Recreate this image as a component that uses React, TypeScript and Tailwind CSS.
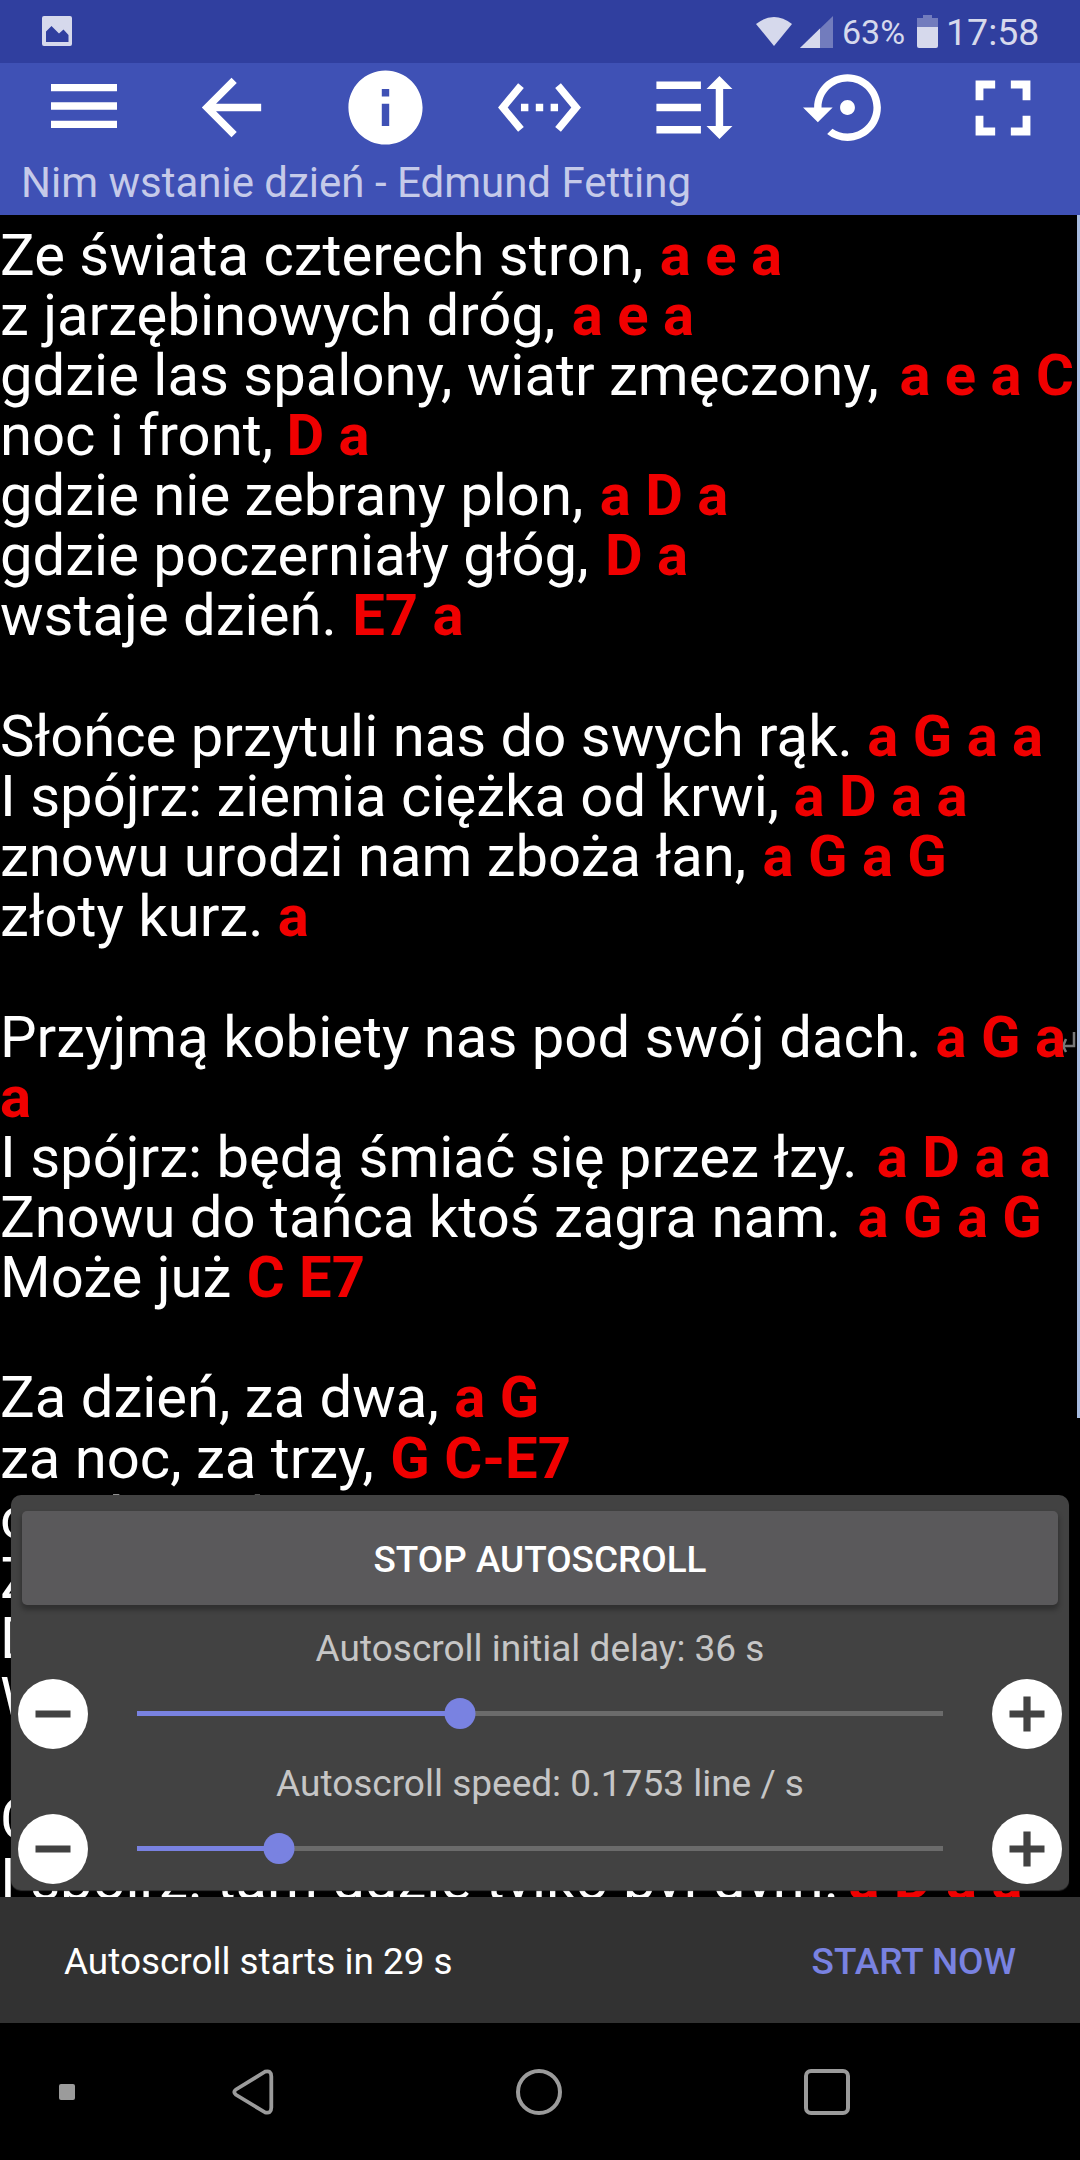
import type { ReactNode } from "react";

type Line = { text: string; chords?: string; wrapped?: boolean; shift?: number };

// `shift` nudges the chord run (px) relative to the end of the lyric text.
const LINES: Line[] = [
  { text: "Ze świata czterech stron, ", chords: "a e a", shift: 2 },
  { text: "z jarzębinowych dróg, ", chords: "a e a", shift: 2 },
  { text: "gdzie las spalony, wiatr zmęczony, ", chords: "a e a C", shift: 6 },
  { text: "noc i front, ", chords: "D a", shift: -1 },
  { text: "gdzie nie zebrany plon, ", chords: "a D a", shift: 2 },
  { text: "gdzie poczerniały głóg, ", chords: "D a", shift: 2 },
  { text: "wstaje dzień. ", chords: "E7 a", shift: 1 },
  { text: "" },
  { text: "Słońce przytuli nas do swych rąk. ", chords: "a G a a" },
  { text: "I spójrz: ziemia ciężka od krwi, ", chords: "a D a a" },
  { text: "znowu urodzi nam zboża łan, ", chords: "a G a G", shift: 2 },
  { text: "złoty kurz. ", chords: "a" },
  { text: "" },
  { text: "Przyjmą kobiety nas pod swój dach. ", chords: "a G a", wrapped: true },
  { text: "", chords: "a" },
  { text: "I spójrz: będą śmiać się przez łzy. ", chords: "a D a a", shift: 5 },
  { text: "Znowu do tańca ktoś zagra nam. ", chords: "a G a G", shift: 2 },
  { text: "Może już ", chords: "C E7", shift: 1 },
  { text: "" },
  { text: "Za dzień, za dwa, ", chords: "a G", shift: 1 },
  { text: "za noc, za trzy, ", chords: "G C-E7", shift: 2 },
  { text: "choć nie dziś. " },
  { text: "Za noc, za dzień" },
  { text: "Doczekasz się," },
  { text: "Wstanie świt." },
  { text: "" },
  { text: "Chleby upieką się w piecach nam." },
  { text: "I spójrz: tam gdzie tylko był dym. ", chords: "a D a a", shift: -5 },
];

function Icon({ size, children }: { size: number; children: ReactNode }) {
  return (
    <svg width={size} height={size} viewBox="0 0 24 24" fill="currentColor" className="block shrink-0">
      {children}
    </svg>
  );
}

function StatusBar() {
  return (
    <div className="flex h-[63px] shrink-0 items-start bg-[#303f9f] pl-[42px] text-[#d6d9ec]">
      <svg width="30" height="30" viewBox="0 0 30 30" className="mt-4 block" fill="currentColor">
        <path fillRule="evenodd" d="M2 0H28Q30 0 30 2V28Q30 30 28 30H2Q0 30 0 28V2Q0 0 2 0ZM4 26H26.500V19L21.500 13.500L17 17.500L9.500 10L4 15.500Z" />
      </svg>
      <svg width="36" height="29" viewBox="0 0 36 29" className="mt-[17px] ml-[684px] block" fill="currentColor">
        <path d="M0 7Q18 -7 36 7L18 29Z" />
      </svg>
      <svg width="33" height="32" viewBox="0 0 33 32" className="mt-4 ml-[8px] block" fill="currentColor">
        <path d="M0 32L33 0V32Z" opacity="0.4" />
        <path d="M0 32L20 12.600V32Z" />
      </svg>
      <span className="mt-[12px] ml-[9px] w-[62px] text-[34px] leading-[41px] whitespace-nowrap">63%</span>
      <svg width="21" height="33" viewBox="0 0 21 33" className="mt-[15px] ml-[13px] block" fill="currentColor">
        <path d="M6 0H15V3H21V12H0V3H6Z" opacity="0.4" />
        <path d="M0 12H21V31Q21 33 19 33H2Q0 33 0 31Z" />
      </svg>
      <span className="mt-[10px] ml-[8px] text-[37.500px] leading-[45px] whitespace-nowrap">17:58</span>
    </div>
  );
}

function Toolbar() {
  return (
    <div className="flex h-[152px] shrink-0 flex-col bg-[#3f51b5] text-white">
      <div className="flex h-[89px] items-center pl-10">
        <div className="-mt-[3px]">
          <Icon size={88}>
            <path d="M3 18h18v-2H3v2zm0-5h18v-2H3v2zm0-7v2h18V6H3z" />
          </Icon>
        </div>
        <div className="ml-[59px] flex gap-[65px]">
          <Icon size={89}>
            <path d="M20 11H7.830l5.590-5.590L12 4l-8 8 8 8 1.410-1.410L7.830 13H20v-2z" />
          </Icon>
          <Icon size={89}>
            <path d="M12 2C6.480 2 2 6.480 2 12s4.480 10 10 10 10-4.480 10-10S17.520 2 12 2zm1 15h-2v-6h2v6zm0-8h-2V7h2v2z" />
          </Icon>
          <Icon size={89}>
            <path d="M7.770 6.760L6.230 5.480.82 12l5.410 6.520 1.540-1.280L3.420 12l4.350-5.240zM7 13h2v-2H7v2zm10-2h-2v2h2v-2zm-6 2h2v-2h-2v2zm6.770-7.520l-1.540 1.280L20.580 12l-4.350 5.240 1.540 1.280L23.180 12l-5.410-6.520z" />
          </Icon>
          <Icon size={89}>
            <path d="M18 7h-2.500L19 3.500 22.500 7H20v10h2.500L19 20.500 15.500 17H18V7zM2 5h12v2H2zM2 17h12v2H2zM2 11h12v2H2z" />
          </Icon>
          <Icon size={89}>
            <path d="M14 12c0-1.100-.9-2-2-2s-2 .9-2 2 .9 2 2 2 2-.9 2-2zm-2-9c-4.970 0-9 4.030-9 9H0l4 4 4-4H5c0-3.870 3.130-7 7-7s7 3.130 7 7-3.130 7-7 7c-1.510 0-2.910-.49-4.060-1.300l-1.420 1.440C8.040 20.300 9.940 21 12 21c4.970 0 9-4.030 9-9s-4.030-9-9-9z" />
          </Icon>
        </div>
        <div className="ml-[64px]">
          <Icon size={94}>
            <path d="M7 14H5v5h5v-2H7v-3zm-2-4h2V7h3V5H5v5zm12 7h-3v2h5v-5h-2v3zM14 5v2h3v3h2V5h-5z" />
          </Icon>
        </div>
      </div>
      <div className="pl-[21px] text-[42px] leading-[62px] whitespace-nowrap text-[#c5cae9]">
        Nim wstanie dzień - Edmund Fetting
      </div>
    </div>
  );
}

function Lyrics() {
  return (
    <div className="relative h-[1682px] shrink-0 overflow-hidden pt-[9.500px]">
      {LINES.map((l, i) => (
        <div key={i} className="relative h-[60.160px] text-[58px] leading-[60.160px] whitespace-pre text-white">
          {l.wrapped && (
            <svg width="14" height="21" viewBox="0 0 14 21" className="absolute top-[25px] left-[1062px]" fill="none" stroke="#777" strokeWidth="2.500">
              <path d="M12 0V14H1M4 7L1 14L4 20" />
            </svg>
          )}
          {l.text}
          {l.chords && (
            <span className="relative font-bold text-[#f00000]" style={{ marginLeft: `${l.shift ?? 0}px` }}>
              {l.chords}
            </span>
          )}
        </div>
      ))}
      <div className="absolute top-0 right-0 h-[1203px] w-[3px] bg-[#a9bde1]" />
    </div>
  );
}

function RoundButton({ plus }: { plus?: boolean }) {
  return (
    <svg width="70" height="70" viewBox="0 0 70 70" className="block shrink-0">
      <circle cx="35" cy="35" r="35" fill="#fff" />
      <path d={plus ? "M17.500 35H52.500M35 17.500V52.500" : "M17.500 35H52.500"} stroke="#424242" strokeWidth="7.200" />
    </svg>
  );
}

function SliderRow({ value }: { value: number }) {
  return (
    <div className="flex h-[70px] items-center justify-between px-[7px]">
      <RoundButton />
      <div className="relative -mt-px h-[5px] w-[806px] bg-[#6b6b6b]">
        <div className="h-full bg-[#7982e1]" style={{ width: `${value}px` }} />
        <div className="absolute -top-[13px] size-[31px] -translate-x-1/2 rounded-full bg-[#7982e1]" style={{ left: `${value}px` }} />
      </div>
      <RoundButton plus />
    </div>
  );
}

function AutoscrollPanel() {
  return (
    <div className="absolute top-[1495px] left-[11px] h-[395px] w-[1058px] rounded-[10px] bg-[#424242] pt-4 text-[37px] text-[#c6c6c6] shadow-[0_1px_1px_#303030]">
      <button className="mx-[11px] flex h-[94px] w-[1036px] items-center justify-center rounded-[5px] bg-[#5a595b] pt-[3px] text-[36.900px] font-medium text-white shadow-[0_4px_5px_1px_rgba(0,0,0,0.28)]">
        STOP AUTOSCROLL
      </button>
      <div className="mt-[19px] h-[55px] text-center leading-[50px]">Autoscroll initial delay: 36 s</div>
      <SliderRow value={322.5} />
      <div className="mt-[10px] h-[55px] text-center leading-[50px]">Autoscroll speed: 0.1753 line / s</div>
      <SliderRow value={141.5} />
    </div>
  );
}

function Snackbar() {
  return (
    <div className="flex h-[126px] shrink-0 items-center justify-between bg-[#323232] pt-[3px] pr-[64px] pl-[64px] text-[36.900px] text-white">
      <span>Autoscroll starts in 29 s</span>
      <button className="font-medium text-[#7982e1]">START NOW</button>
    </div>
  );
}

function NavBar() {
  return (
    <div className="flex h-[137px] shrink-0 items-center bg-black pl-[59px] text-[#9b9b9b]">
      <div className="size-4 rounded-xs bg-[#9b9b9b]" />
      <svg width="42" height="46" viewBox="0 0 42 46" className="ml-[157px] block" fill="none" stroke="currentColor" strokeWidth="3.800">
        <path d="M4 20.500Q0.500 23 4 25.800L33 43.300Q39.300 45 39.300 38.500V7.500Q39.300 1 33 2.700Z" />
      </svg>
      <div className="ml-[242px] size-[46px] rounded-full border-4 border-current" />
      <div className="ml-[242px] size-[46px] rounded-[7px] border-4 border-current" />
    </div>
  );
}

export default function App() {
  return (
    <div className="relative flex h-[2160px] w-[1080px] flex-col overflow-hidden bg-black font-['Roboto',sans-serif]">
      <StatusBar />
      <Toolbar />
      <Lyrics />
      <AutoscrollPanel />
      <Snackbar />
      <NavBar />
    </div>
  );
}
